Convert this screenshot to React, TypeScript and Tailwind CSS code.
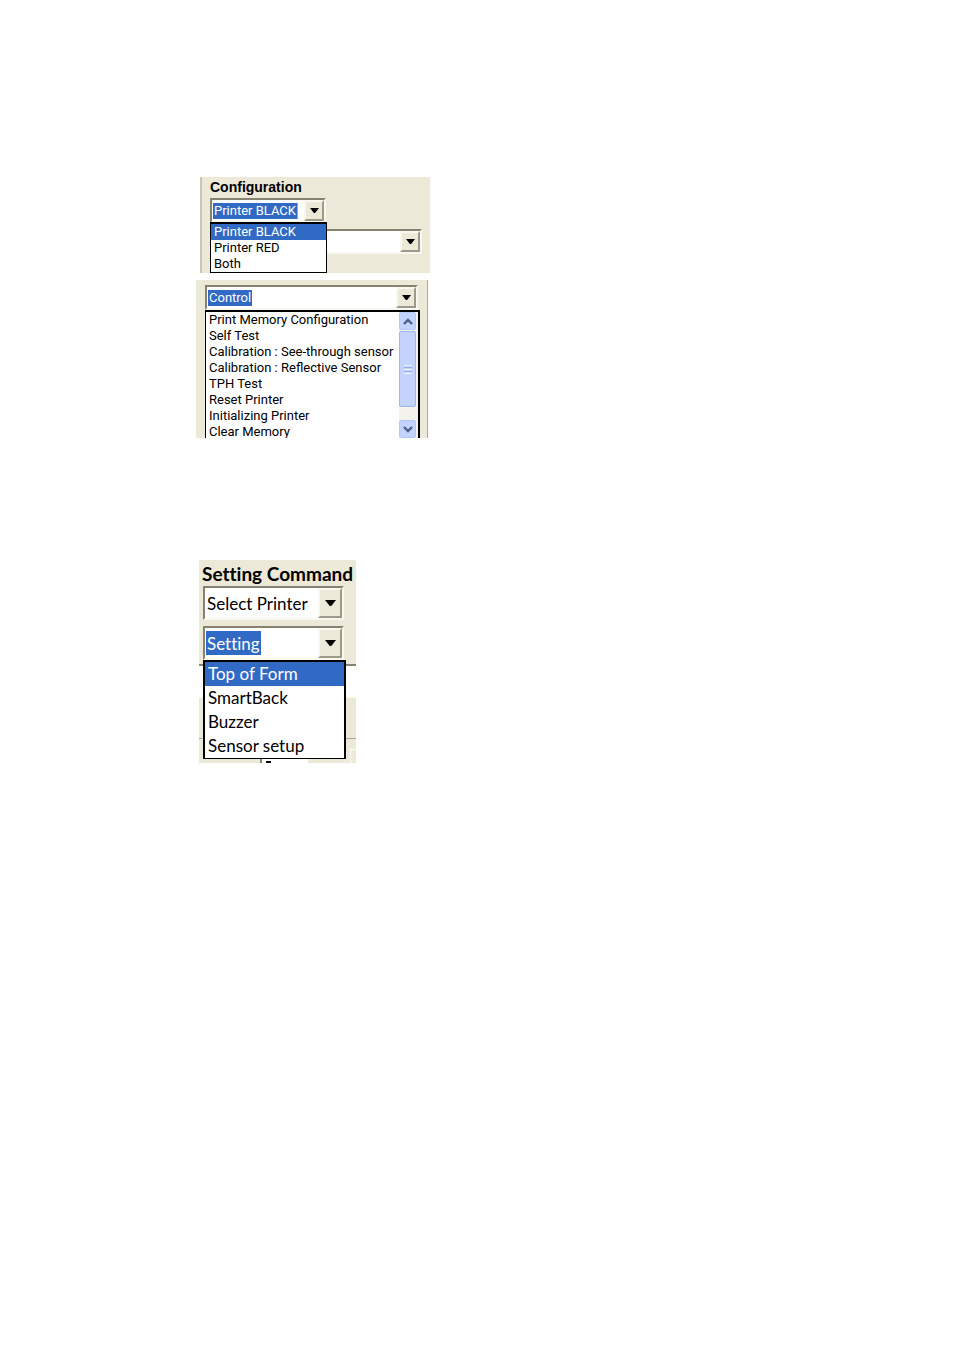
import React from "react";

function Arrow({ large = false }: { large?: boolean }) {
  return (
    <button
      type="button"
      aria-label="Open list"
      className={`flex shrink-0 items-center justify-center border-2 border-t-[#f8f7f0] border-l-[#f8f7f0] border-r-[#9d9a8c] border-b-[#9d9a8c] bg-[#ece9d8] ${
        large ? "w-6" : "w-5"
      }`}
    >
      <svg
        className={large ? "h-[6px] w-[11px]" : "h-[5px] w-[9px]"}
        viewBox="0 0 10 5"
        preserveAspectRatio="none"
        aria-hidden="true"
      >
        <path d="M0 0H10L5.7 5H4.3Z" fill="#000" />
      </svg>
    </button>
  );
}

type ComboProps = {
  label: string;
  value: string;
  active?: boolean;
  large?: boolean;
  caret?: boolean;
  className: string;
};

function Combo({ label, value, active, large, caret, className }: ComboProps) {
  return (
    <div
      className={`flex border-2 border-t-[#85826f] border-l-[#85826f] border-r-[#f8f7f0] border-b-[#f8f7f0] bg-white ${className}`}
    >
      <div className="flex min-w-0 flex-1 items-center pl-px">
        <select
          aria-label={label}
          defaultValue={value}
          className={`field-sizing-content appearance-none px-px outline-none ${
            large ? "h-6" : "h-4 leading-4"
          } ${active ? "bg-[#316ac5] text-white" : "bg-white text-black"} ${
            caret ? "border-r border-[#d99a4a]" : ""
          }`}
        >
          <option value={value}>{value}</option>
        </select>
      </div>
      <Arrow large={large} />
    </div>
  );
}

type OptionsProps = { label: string; items: string[]; selected?: number; row: string };

function Options({ label, items, selected, row }: OptionsProps) {
  return (
    <ul role="listbox" aria-label={label} className="min-w-0 flex-1">
      {items.map((item, i) => (
        <li
          key={item}
          role="option"
          aria-selected={i === selected}
          className={`whitespace-nowrap pl-[3px] ${row} ${
            i === selected ? "bg-[#316ac5] text-white" : "text-black"
          }`}
        >
          {item}
        </li>
      ))}
    </ul>
  );
}

function ScrollButton({ up = false }: { up?: boolean }) {
  return (
    <button
      type="button"
      aria-label={up ? "Scroll up" : "Scroll down"}
      className="flex h-[18px] w-[17px] shrink-0 items-center justify-center rounded-xs border border-[#b4c8f6] bg-[#c3d3fd]"
    >
      <svg className="h-[7px] w-[10px]" viewBox="0 0 10 7" aria-hidden="true">
        <path
          d={up ? "M1 6L5 2L9 6" : "M1 1L5 5L9 1"}
          fill="none"
          stroke="#4d6185"
          strokeWidth="2.4"
        />
      </svg>
    </button>
  );
}

function ConfigurationPanel() {
  return (
    <section className="ml-1 h-24 w-[230px] overflow-hidden border-l-2 border-[#c9c6b6] bg-[#ece9d8] pr-2 pl-2">
      <h2 className="h-[21px] font-['Liberation_Sans',Arial,sans-serif] text-[14px] leading-5 font-bold">
        Configuration
      </h2>
      <div className="relative">
        <Combo
          label="Configuration"
          value="Printer BLACK"
          active
          caret
          className="h-[25px] w-[116px]"
        />
        <div className="absolute top-6 left-0 z-10 w-[117px] border border-t-2 border-black bg-white">
          <Options
            label="Printers"
            items={["Printer BLACK", "Printer RED", "Both"]}
            selected={0}
            row="h-4 leading-4"
          />
        </div>
      </div>
      <Combo label="Command" value="" className="mt-[6px] h-[25px] w-full" />
    </section>
  );
}

const controls = [
  "Print Memory Configuration",
  "Self Test",
  "Calibration : See-through sensor",
  "Calibration : Reflective Sensor",
  "TPH Test",
  "Reset Printer",
  "Initializing Printer",
  "Clear Memory",
];

function ControlPanel() {
  return (
    <section className="mt-[7px] h-[158px] w-[232px] overflow-hidden border-r border-[#aca899] bg-[#ece9d8] pt-[5px] pr-[7px] pl-[9px]">
      <Combo label="Control" value="Control" active className="h-[25px] w-[213px]" />
      <div className="flex h-32 w-[215px] border border-t-2 border-r-2 border-b-0 border-black bg-white">
        <Options label="Control commands" items={controls} row="h-4 leading-4" />
        <div className="flex w-[19px] flex-col bg-[#f3f2ec]">
          <ScrollButton up />
          <div className="mt-px flex h-[76px] w-[17px] flex-col items-center justify-center gap-px rounded-xs border border-[#9fb7ef] bg-[#c3d3fd]">
            <i className="h-px w-2 bg-[#eef4fe]" />
            <i className="h-px w-2 bg-[#8cb0f8]" />
            <i className="h-px w-2 bg-[#eef4fe]" />
            <i className="h-px w-2 bg-[#8cb0f8]" />
            <i className="h-px w-2 bg-[#eef4fe]" />
          </div>
          <div className="flex-1" />
          <ScrollButton />
        </div>
      </div>
    </section>
  );
}

function SettingPanel() {
  return (
    <section className="mt-[122px] ml-[3px] h-[203px] w-[157px] overflow-hidden bg-[#ece9d8] font-['Century_Gothic',Lato,sans-serif] text-[17px] [font-variant-ligatures:none]">
      <h2 className="h-[26px] pl-[3px] text-[19px] leading-7 font-bold whitespace-nowrap">
        Setting Command
      </h2>
      <div className="relative pl-1">
        <Combo label="Printer" value="Select Printer" large className="h-[34px] w-[141px]" />
        <Combo label="Setting" value="Setting" active large className="mt-[6px] h-[34px] w-[141px]" />
        <div className="absolute top-[74px] left-1 z-10 w-[143px] border-2 border-b border-black bg-white">
          <Options
            label="Settings"
            items={["Top of Form", "SmartBack", "Buzzer", "Sensor setup"]}
            selected={0}
            row="h-6 leading-6"
          />
        </div>
      </div>
      <div className="mt-1 h-[34px] border-t-2 border-b border-t-[#85826f] border-b-[#f8f7f0] bg-white" />
      <div className="h-[41px] border-b border-[#aca899]" />
      <div className="flex h-6 justify-between pt-[10px]">
        <div className="ml-[61px] w-12 border-l-2 border-[#85826f] bg-white pt-[12px] pl-1">
          <i className="block h-[2px] w-[5px] bg-black" />
        </div>
        <div className="w-[6px] border-t border-l border-white" />
      </div>
    </section>
  );
}

export default function App() {
  return (
    <main className="min-h-screen bg-white pt-[177px] pl-[196px] font-[Roboto,'Liberation_Sans',sans-serif] text-[13px] text-black">
      <ConfigurationPanel />
      <ControlPanel />
      <SettingPanel />
    </main>
  );
}
